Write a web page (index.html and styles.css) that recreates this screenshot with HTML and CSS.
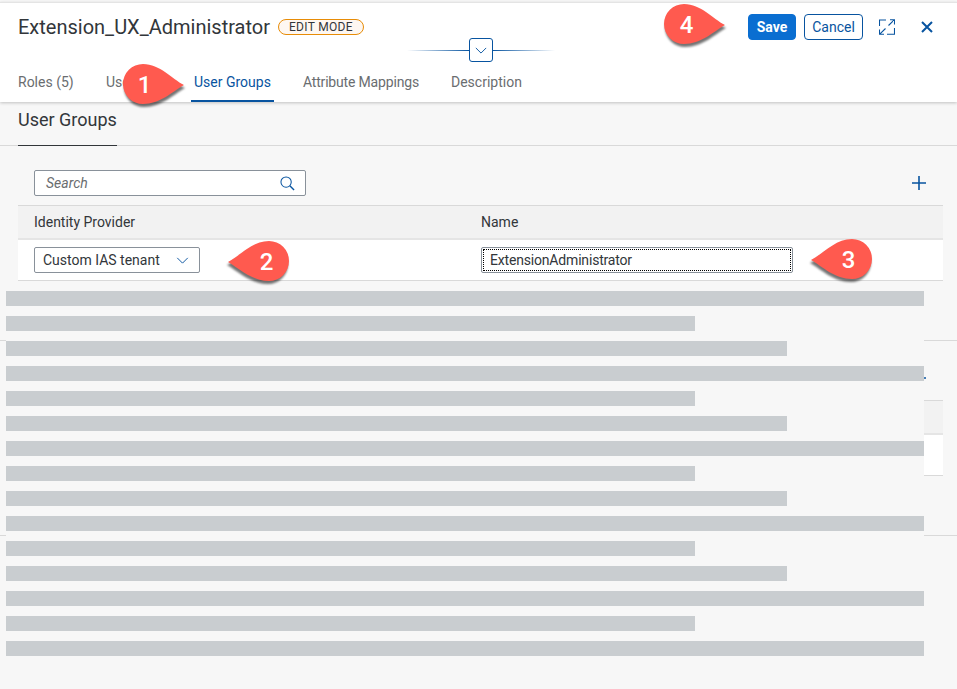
FILE: index.html
```html
<!DOCTYPE html>
<html lang="en">
<head>
<meta charset="utf-8">
<title>Extension_UX_Administrator</title>
<link rel="stylesheet" href="styles.css">
</head>
<body>
<div class="page">
  <header class="head">
    <div class="title-row">
      <h1 class="title">Extension_UX_Administrator</h1>
      <span class="badge">EDIT MODE</span>
      <div class="actions">
        <button class="btn btn-save">Save</button>
        <button class="btn btn-cancel">Cancel</button>
        <svg class="icon-expand" viewBox="0 0 16 16"><path d="M.5 7V1H7M11 .7H15.500V5.500M15.500 .7L9.500 6.500M15.500 9V15.300H8M.5 10.500V15.300H5M.5 15.300L6.500 9.500" fill="none" stroke="#0854a0" stroke-width="1.100"/></svg>
        <svg class="icon-close" viewBox="0 0 12 12"><path d="M1 1l10 10M11 1L1 11" fill="none" stroke="#0854a0" stroke-width="2"/></svg>
      </div>
    </div>
    <div class="expander">
      <span class="rule rule-left"></span>
      <span class="expander-btn"><svg viewBox="0 0 14 8"><path d="M1 1l6 6 6-6" fill="none" stroke="#0854a0" stroke-width="1.100"/></svg></span>
      <span class="rule rule-right"></span>
    </div>
    <nav class="tabs">
      <a class="tab tab-roles">Roles (5)</a>
      <a class="tab tab-users">Users</a>
      <a class="tab tab-active">User Groups</a>
      <a class="tab tab-tight">Attribute Mappings</a>
      <a class="tab">Description</a>
    </nav>
  </header>

  <section class="section-head section-head-first">
    <h2 class="section-title">User Groups</h2>
  </section>
  <div class="toolbar">
    <div class="search">
      <span class="search-text">Search</span>
      <svg class="icon-search" viewBox="0 0 16 16"><circle cx="6.500" cy="6.500" r="5.500" fill="none" stroke="#0854a0" stroke-width="1.100"/><path d="M10.500 10.500l4.500 4.500" fill="none" stroke="#0854a0" stroke-width="1.500"/></svg>
    </div>
    <svg class="icon-plus" viewBox="0 0 14 14"><path d="M7 0v14M0 7h14" fill="none" stroke="#0854a0" stroke-width="1.600"/></svg>
  </div>
  <div class="table">
    <div class="table-head">
      <div class="cell-a">Identity Provider</div>
      <div class="cell-b">Name</div>
    </div>
    <div class="table-row">
      <div class="cell-a">
        <div class="select">
          <span>Custom IAS tenant</span>
          <svg class="icon-chevron" viewBox="0 0 14 8"><path d="M1 1l6 6 6-6" fill="none" stroke="#0854a0" stroke-width="1.100"/></svg>
        </div>
      </div>
      <div class="cell-b">
        <div class="name-input"><span class="name-focus">ExtensionAdministrator</span></div>
      </div>
    </div>
  </div>

  <section class="section-head"></section>
  <div class="toolbar">
    <svg class="icon-plus" viewBox="0 0 14 14"><path d="M7 0v14M0 7h14" fill="none" stroke="#0854a0" stroke-width="1.600"/></svg>
  </div>
  <div class="table">
    <div class="table-head"></div>
    <div class="table-row"></div>
  </div>
  <section class="section-head"></section>

  <div class="redaction">
    <div class="bar bar-long"></div>
    <div class="bar bar-short"></div>
    <div class="bar bar-mid"></div>
    <div class="bar bar-long"></div>
    <div class="bar bar-short"></div>
    <div class="bar bar-mid"></div>
    <div class="bar bar-long"></div>
    <div class="bar bar-short"></div>
    <div class="bar bar-mid"></div>
    <div class="bar bar-long"></div>
    <div class="bar bar-short"></div>
    <div class="bar bar-mid"></div>
    <div class="bar bar-long"></div>
    <div class="bar bar-short"></div>
    <div class="bar bar-long"></div>
  </div>

  <div class="callout callout-1">
    <svg viewBox="0 0 61 41"><path d="M61 21C49 15 37 0 20 0A20 20 0 0 0 20 40C37 40 49 28 61 21Z" fill="#ff5a4f"/></svg>
    <span>1</span>
  </div>
  <div class="callout callout-2">
    <svg class="flip" viewBox="0 0 61 41"><path d="M61 21C49 15 37 0 20 0A20 20 0 0 0 20 40C37 40 49 28 61 21Z" fill="#ff5a4f"/></svg>
    <span>2</span>
  </div>
  <div class="callout callout-3">
    <svg class="flip" viewBox="0 0 61 41"><path d="M61 21C49 15 37 0 20 0A20 20 0 0 0 20 40C37 40 49 28 61 21Z" fill="#ff5a4f"/></svg>
    <span>3</span>
  </div>
  <div class="callout callout-4">
    <svg viewBox="0 0 61 41"><path d="M61 21C49 15 37 0 20 0A20 20 0 0 0 20 40C37 40 49 28 61 21Z" fill="#ff5a4f"/></svg>
    <span>4</span>
  </div>
</div>
</body>
</html>
```

FILE: styles.css
```css
* { box-sizing: border-box; }

html, body {
  margin: 0;
  height: 100%;
  overflow: hidden;
}

body {
  background: #f7f7f7;
  color: #32363a;
  font-family: Roboto, "Liberation Sans", sans-serif;
}

.page {
  position: relative;
  width: 957px;
  height: 689px;
  overflow: hidden;
}

/* Header */
.head {
  position: relative;
  height: 100px;
  margin-top: 2px;
  background: #fff;
  border-top: 1px solid #e4e4e4;
  box-shadow: 0 1px 3px rgba(0, 0, 0, 0.22);
}

.title-row {
  display: flex;
  align-items: center;
  height: 26px;
  margin-top: 11px;
  padding: 0 24px 0 18px;
}

.title {
  margin: 0;
  font-size: 20px;
  font-weight: 400;
  line-height: 26px;
}

.badge {
  margin-left: 8px;
  height: 16px;
  padding: 0 10px;
  display: flex;
  align-items: center;
  background: #fef7f1;
  border: 1px solid #e78c07;
  border-radius: 8px;
  font-size: 12px;
  letter-spacing: 0.3px;
  color: #32363a;
}

.actions {
  margin-left: auto;
  display: flex;
  align-items: center;
}

.btn {
  height: 26px;
  border-radius: 4px;
  font-family: inherit;
  font-size: 14px;
  padding: 0;
}

.btn-save {
  width: 48px;
  background: #0a6ed1;
  border: 1px solid #0a6ed1;
  color: #fff;
  font-weight: 700;
}

.btn-cancel {
  width: 59px;
  margin-left: 8px;
  background: #fff;
  border: 1px solid #0854a0;
  color: #0854a0;
}

.icon-expand {
  width: 16px;
  height: 16px;
  margin-left: 16px;
}

.icon-close {
  width: 12px;
  height: 12px;
  margin-left: 26px;
}

.expander {
  display: flex;
  align-items: center;
  justify-content: center;
  margin-top: -2px;
  margin-left: 5px;
  height: 24px;
}

.rule {
  display: block;
  width: 62px;
  height: 1px;
}

.rule-left { background: linear-gradient(to right, rgba(8, 84, 160, 0), #0854a0); }
.rule-right { background: linear-gradient(to right, #0854a0, rgba(8, 84, 160, 0)); }

.expander-btn {
  width: 24px;
  height: 24px;
  display: flex;
  align-items: center;
  justify-content: center;
  background: #fff;
  border: 1px solid #0854a0;
  border-radius: 3px;
}

.expander-btn svg {
  width: 12px;
  height: 7px;
}

.tabs {
  display: flex;
  gap: 26px;
  height: 40px;
  padding-left: 15px;
}

.tab {
  padding: 2px 3px 0;
  height: 40px;
  display: flex;
  align-items: center;
  font-size: 14px;
  color: #6a6d70;
  white-space: nowrap;
  border-bottom: 2px solid transparent;
}

.tab-roles { width: 62px; }
.tab-users { width: 62px; }
.tab-tight { letter-spacing: -0.17px; }

.tab-active {
  color: #0854a0;
  border-bottom-color: #0854a0;
}

/* Sections */
.section-head {
  height: 60px;
  border-bottom: 1px solid #d9d9d9;
}

.section-head-first {
  height: 44px;
  padding-left: 18px;
}

.section-title {
  margin: 0;
  display: inline-block;
  height: 44px;
  font-size: 18px;
  font-weight: 400;
  line-height: 36px;
  border-bottom: 1px solid #32363a;
}

.toolbar {
  height: 59px;
  display: flex;
  align-items: center;
  justify-content: flex-end;
  padding: 15px 31px 0 34px;
}

.search {
  width: 272px;
  height: 26px;
  margin-right: auto;
  display: flex;
  align-items: center;
  justify-content: space-between;
  padding: 0 10px 0 11px;
  background: #fff;
  border: 1px solid #89919a;
  border-radius: 2px;
}

.search-text {
  font-size: 14px;
  font-style: italic;
  color: #6a6d70;
}

.icon-search {
  width: 15px;
  height: 15px;
}

.icon-plus {
  width: 14px;
  height: 14px;
}

/* Table */
.table {
  margin: 0 14px 0 18px;
  border-bottom: 1px solid #d9d9d9;
}

.table-head {
  height: 35px;
  display: flex;
  align-items: center;
  background: #f2f2f2;
  border-top: 1px solid #d9d9d9;
  border-bottom: 2px solid #e5e5e5;
  font-size: 14px;
}

.table-row {
  height: 40px;
  display: flex;
  align-items: center;
  background: #fff;
}

.cell-a {
  width: 463px;
  padding-left: 16px;
}

.cell-b {
  flex: 1;
}

.select {
  width: 166px;
  height: 26px;
  display: flex;
  align-items: center;
  justify-content: space-between;
  padding: 0 10px 0 8px;
  background: #fff;
  border: 1px solid #89919a;
  border-radius: 2px;
  font-size: 14px;
}

.icon-chevron {
  width: 13px;
  height: 7px;
}

.name-input {
  width: 312px;
  height: 26px;
  padding: 2px;
  background: #fff;
  border: 1px solid #89919a;
  border-radius: 2px;
  font-size: 14px;
}

.name-focus {
  display: block;
  height: 20px;
  padding-left: 6px;
  line-height: 20px;
  letter-spacing: -0.18px;
  outline: 1px dotted #000;
}

/* Redaction panel lying over the content */
.redaction {
  position: absolute;
  left: 6px;
  top: 281px;
  width: 918px;
  height: 389px;
  padding-top: 10px;
  display: flex;
  flex-direction: column;
  gap: 10px;
  background: #f7f7f7;
}

.bar {
  height: 15px;
  background: #c9cdd0;
}

.bar-long { width: 918px; }
.bar-short { width: 689px; }
.bar-mid { width: 781px; }

/* Numbered callouts */
.callout {
  position: absolute;
  width: 61px;
  height: 41px;
  display: flex;
  align-items: center;
  justify-content: center;
  color: #fff;
  font-family: Roboto, "Liberation Sans", sans-serif;
  font-weight: 500;
  font-size: 24px;
}

.callout svg {
  position: absolute;
  left: 0;
  top: 0;
  width: 61px;
  height: 41px;
  overflow: visible;
  filter: drop-shadow(1px 3px 1px rgba(0, 0, 0, 0.55));
}

.callout svg.flip { transform: scaleX(-1); }

.callout span { position: relative; }

.callout-1 { left: 123px; top: 64px; }
.callout-1 span { right: 9px; }
.callout-2 { left: 228px; top: 241px; }
.callout-2 span { left: 8px; }
.callout-3 { left: 811px; top: 239px; }
.callout-3 span { left: 7px; }
.callout-4 { left: 664px; top: 4px; }
.callout-4 span { right: 8px; }
```
